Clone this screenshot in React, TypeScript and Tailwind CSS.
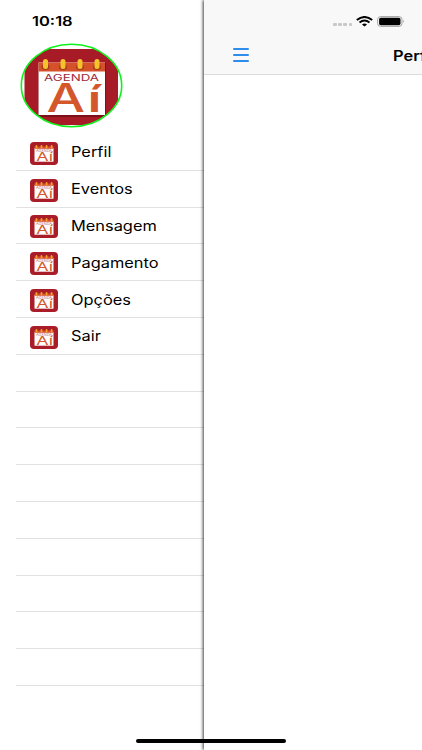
const menuItems = ["Perfil", "Eventos", "Mensagem", "Pagamento", "Opções", "Sair"];
const emptyRows = 9;

const Logo = () => {
  return (
    <svg viewBox="0 0 104 86" className="w-[104px] h-[86px] shrink-0">
      <defs>
        <clipPath id="logoClip">
          <ellipse cx="51.5" cy="42.5" rx="50" ry="41" />
        </clipPath>
      </defs>
      <g clipPath="url(#logoClip)">
        <rect x="4.5" y="6" width="93.5" height="76" fill="#a61b25" />
        <rect x="18" y="20" width="68" height="54" fill="#7d1119" />
        <rect x="18.5" y="19.5" width="66.5" height="52.5" fill="#fff" />
        <rect x="18.5" y="19.5" width="66.5" height="9" fill="#d4512a" />
        {[25.5, 43, 60, 77].map((x) => (
          <g key={x}>
            <ellipse cx={x} cy="24" rx="4" ry="3" fill="#a63a1c" />
            <rect x={x - 2.5} y="16" width="5" height="10" rx="2.5" fill="#f6c22c" />
          </g>
        ))}
        <text x="24" y="38" fontSize="9" fontWeight="400" fill="#a02c3c" textLength="55" lengthAdjust="spacingAndGlyphs" className="font-['Inter',sans-serif]">
          AGENDA
        </text>
        <text x="26.5" y="69" fontSize="39" fontWeight="500" fill="#d4572b" textLength="38.5" lengthAdjust="spacingAndGlyphs" className="font-['Inter',sans-serif]">
          A
        </text>
        <text x="67.5" y="69" fontSize="37" fontWeight="600" fill="#d4572b" textLength="14" lengthAdjust="spacingAndGlyphs" className="font-['Inter',sans-serif]">
          í
        </text>
      </g>
      <ellipse cx="51.5" cy="42.5" rx="50.2" ry="41.2" fill="none" stroke="#10f01c" strokeWidth="1.6" />
    </svg>
  );
};

const SmallLogo = () => {
  return (
    <svg viewBox="0 0 28 23" className="w-7 h-[23px] shrink-0">
      <rect width="28" height="23" rx="4" fill="#a81d28" />
      <rect x="4.5" y="6" width="19" height="13.7" fill="#fff" />
      <rect x="4.5" y="4.5" width="19" height="2.3" fill="#d4512a" />
      {[6.5, 11.5, 16.6, 21.6].map((x) => (
        <rect key={x} x={x - 0.9} y="3" width="1.8" height="3.5" rx="0.9" fill="#f6a02c" />
      ))}
      <text x="6" y="9.6" fontSize="2.8" fill="#c0656d" textLength="16" lengthAdjust="spacingAndGlyphs" className="font-['Inter',sans-serif]">
        AGENDA
      </text>
      <text x="6.3" y="19" fontSize="11.8" fontWeight="400" fill="#d4572b" textLength="16.7" lengthAdjust="spacingAndGlyphs" className="font-['Inter',sans-serif]">
        Aí
      </text>
    </svg>
  );
};

const StatusIcons = () => {
  return (
    <div className="flex items-center h-3">
      <div className="flex gap-[1.4px] mt-[7px]">
        {[0, 1, 2, 3].map((dot) => (
          <span key={dot} className="w-[3.8px] h-[3px] rounded-[1px] bg-[#c8c8c8]" />
        ))}
      </div>
      <svg viewBox="0 0 17 11" className="w-[17px] h-[11px] ml-[4px]" fill="none" stroke="#000">
        <path d="M0.8 4 Q8.5 -2 16.2 4" strokeWidth="2" />
        <path d="M3.5 6.6 Q8.5 2.6 13.5 6.6" strokeWidth="1.9" />
        <path d="M6 8.4 Q8.5 6.6 11 8.4 L8.5 10.6 Z" fill="#000" stroke="none" />
      </svg>
      <svg viewBox="0 0 28 11" className="w-7 h-[11px] ml-1">
        <rect x="0.6" y="0.6" width="24.4" height="9.8" rx="3" fill="none" stroke="#a3a3a3" />
        <rect x="2.1" y="1.8" width="21.4" height="7.4" rx="1.6" fill="#000" />
        <path d="M26.1 3.8 Q27.6 5.3 26.1 7 Z" fill="#888" />
      </svg>
    </div>
  );
};

const App = () => {
  return (
    <div className="relative flex w-[422px] h-[750px] overflow-hidden bg-white text-black font-['Inter','Liberation_Sans',sans-serif]">
      <aside className="w-[204px] shrink-0">
        <div className="h-[43px] pt-2 pl-8">
          <span className="inline-block origin-left scale-x-[1.27] text-[13px] leading-5 font-semibold">10:18</span>
        </div>
        <div className="h-[91px] pl-5">
          <Logo />
        </div>
        <ul className="pl-4">
          {menuItems.map((item) => (
            <li key={item} className="flex h-[36.8px] items-center border-b border-[#e1e1e3] pl-3.5">
              <div className="pt-[3px]">
                <SmallLogo />
              </div>
              <span className="ml-[13px] mt-px inline-block origin-left scale-x-[1.17] text-[14px] leading-5">{item}</span>
            </li>
          ))}
          {Array.from({ length: emptyRows }).map((_, index) => (
            <li key={index} className="h-[36.8px] border-b border-[#e1e1e3]" />
          ))}
        </ul>
      </aside>
      <main className="relative w-[218px] shrink-0 bg-white shadow-[-1px_0_3px_rgba(0,0,0,0.75)]">
        <header className="h-[75px] overflow-hidden border-b border-[#dcdcdc] bg-[#f8f8f8]">
          <div className="pl-[129px] pt-[15px]">
            <StatusIcons />
          </div>
          <div className="flex items-start justify-between pt-[18px]">
            <div className="ml-[29px] mt-[3px] flex flex-col gap-1">
              <span className="h-[2px] w-4 rounded-full bg-[#2e8ceb]" />
              <span className="h-[2px] w-4 rounded-full bg-[#2e8ceb]" />
              <span className="h-[2px] w-4 rounded-full bg-[#2e8ceb]" />
            </div>
            <div className="-mt-0.5 w-[29px] overflow-hidden">
              <span className="inline-block origin-left scale-x-[1.17] text-[14px] leading-5 font-semibold">Perfil</span>
            </div>
          </div>
        </header>
      </main>
      <div className="absolute left-[136px] top-[739px] h-[4px] w-[150px] rounded-full bg-black" />
    </div>
  );
};

export default App;
